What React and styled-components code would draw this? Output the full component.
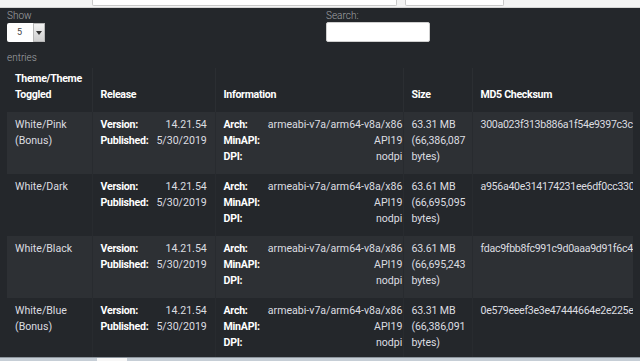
import React from 'react';
import styled, { createGlobalStyle } from 'styled-components';

const GlobalStyle = createGlobalStyle`
	html, body {
		margin: 0;
		padding: 0;
		background: #24272b;
	}
	body {
		font-family: Roboto, 'Liberation Sans', sans-serif;
	}
`;

const rows = [
	{
		theme: ['White/Pink', '(Bonus)'],
		size: '63.31 MB',
		bytes: '(66,386,087',
		md5: '300a023f313b886a1f54e9397c3c0b7a21e4',
	},
	{
		theme: ['White/Dark'],
		size: '63.61 MB',
		bytes: '(66,695,095',
		md5: 'a956a40e314174231ee6df0cc330d51b6a92',
	},
	{
		theme: ['White/Black'],
		size: '63.61 MB',
		bytes: '(66,695,243',
		md5: 'fdac9fbb8fc991c9d0aaa9d91f6c4e08b3d1',
	},
	{
		theme: ['White/Blue', '(Bonus)'],
		size: '63.31 MB',
		bytes: '(66,386,091',
		md5: '0e579eeef3e3e47444664e2e225e9c10fa47',
	},
];

const App = () => {
	return (
		<Page>
			<GlobalStyle />
			<TopStrip>
				<FakeInput $width={303} />
				<FakeInput $width={97} />
			</TopStrip>
			<Controls>
				<LengthBox>
					<Small>Show</Small>
					<Select>
						<SelectValue>5</SelectValue>
						<SelectArrow>
							<svg width='6' height='4' viewBox='0 0 6 4'>
								<path d='M0 0h6L3 4z' fill='#333' />
							</svg>
						</SelectArrow>
					</Select>
					<Small>entries</Small>
				</LengthBox>
				<SearchBox>
					<Small>Search:</Small>
					<SearchInput />
				</SearchBox>
			</Controls>
			<TableWrap>
				<Table>
					<colgroup>
						<col style={{ width: 85 }} />
						<col style={{ width: 123 }} />
						<col style={{ width: 188 }} />
						<col style={{ width: 69 }} />
						<col style={{ width: 300 }} />
					</colgroup>
					<thead>
						<tr>
							<Th>
								Theme/Theme
								<br />
								Toggled
							</Th>
							<Th>Release</Th>
							<Th>Information</Th>
							<Th>Size</Th>
							<Th>MD5 Checksum</Th>
						</tr>
					</thead>
					<tbody>
						{rows.map((row, i) => (
							<Row key={i} $striped={i % 2 === 0}>
								<Td>
									{row.theme.map(t => (
										<div key={t}>{t}</div>
									))}
								</Td>
								<Td $padRight={11}>
									<Pairs>
										<Label>Version:</Label>
										<Value>14.21.54</Value>
										<Label>Published:</Label>
										<Value>5/30/2019</Value>
									</Pairs>
								</Td>
								<Td $padRight={9}>
									<Pairs>
										<Label>Arch:</Label>
										<Value>armeabi-v7a/arm64-v8a/x86</Value>
										<Label>MinAPI:</Label>
										<Value>API19</Value>
										<Label>DPI:</Label>
										<Value>nodpi</Value>
									</Pairs>
								</Td>
								<Td>
									<Tight>{row.size}</Tight>
									<Tight>{row.bytes}</Tight>
									<Tight>bytes)</Tight>
								</Td>
								<Td>
									<Checksum>{row.md5}</Checksum>
								</Td>
							</Row>
						))}
					</tbody>
				</Table>
			</TableWrap>
			<BottomStrip>
				<BottomTab />
			</BottomStrip>
		</Page>
	);
};

const Page = styled.div`
	width: 640px;
	height: 361px;
	overflow: hidden;
	display: flex;
	flex-direction: column;
	background: #24272b;
`;

const TopStrip = styled.div`
	height: 7px;
	flex: none;
	background: #f3f3f3;
	border-bottom: 1px solid #d4d4d4;
	display: flex;
	gap: 8px;
	padding-left: 92px;
`;

const FakeInput = styled.div`
	width: ${p => p.$width}px;
	height: 5px;
	background: #fff;
	border: 1px solid #c9c9c9;
	border-top: none;
	border-radius: 0 0 2px 2px;
`;

const Controls = styled.div`
	flex: none;
	height: 60px;
	display: flex;
	padding: 2px 7px 0;
	box-sizing: border-box;
	color: #9a9c9f;
`;

const LengthBox = styled.div`
	width: 319px;
	display: flex;
	flex-direction: column;
	align-items: flex-start;
`;

const Small = styled.div`
	font-size: 10px;
	line-height: 12px;
	font-weight: 300;
	color: #a3a5a8;
`;

const Select = styled.div`
	display: flex;
	margin: 1px 0 10px;
	height: 19px;
`;

const SelectValue = styled.div`
	width: 26px;
	background: #fff;
	color: #444;
	font-size: 9px;
	line-height: 19px;
	padding-left: 10px;
	box-sizing: border-box;
	border-radius: 2px 0 0 2px;
`;

const SelectArrow = styled.div`
	width: 12px;
	background: linear-gradient(#f2f2f2, #cfcfcf);
	border: 1px solid #b8b8b8;
	box-sizing: border-box;
	display: flex;
	align-items: center;
	justify-content: center;
`;

const SearchBox = styled.div`
	display: flex;
	flex-direction: column;
`;

const SearchInput = styled.div`
	width: 104px;
	height: 20px;
	background: #fff;
	border-radius: 2px;
	border: 1px solid #cfcfcf;
	box-sizing: border-box;
`;

const TableWrap = styled.div`
	flex: none;
	width: 626px;
	height: 289px;
	margin-left: 7px;
	overflow: hidden;
`;

const Table = styled.table`
	table-layout: fixed;
	width: 765px;
	border-collapse: collapse;
	font-size: 10.6px;
	color: #dcdde0;
`;

const Th = styled.th`
	height: 44px;
	box-sizing: border-box;
	text-align: left;
	vertical-align: bottom;
	padding: 0 8px 9px;
	font-weight: 700;
	line-height: 16px;
	color: #fff;
	letter-spacing: -0.3px;
	border-left: 1px solid #2b2e32;
	&:first-child {
		border-left: none;
	}
`;

const Row = styled.tr`
	height: 62px;
	background: ${p => (p.$striped ? '#2d3034' : 'transparent')};
`;

const Td = styled.td`
	vertical-align: top;
	padding: 5px ${p => p.$padRight || 8}px 0 8px;
	line-height: 16px;
	white-space: nowrap;
	overflow: hidden;
	border-left: 1px solid #282b2f;
	&:first-child {
		border-left: none;
	}
`;

const Pairs = styled.div`
	display: grid;
	grid-template-columns: auto 1fr;
	column-gap: 8px;
`;

const Label = styled.span`
	font-weight: 700;
	color: #fff;
	letter-spacing: -0.25px;
`;

const Value = styled.span`
	text-align: right;
`;

const Tight = styled.div`
	letter-spacing: -0.15px;
`;

const Checksum = styled.span`
	letter-spacing: -0.3px;
`;

const BottomStrip = styled.div`
	flex: 1;
	background: #c6ced6;
	border-top: 1px solid #8d959d;
	padding-left: 97px;
`;

const BottomTab = styled.div`
	width: 30px;
	height: 100%;
	background: #f7f7f7;
`;

export default App;
